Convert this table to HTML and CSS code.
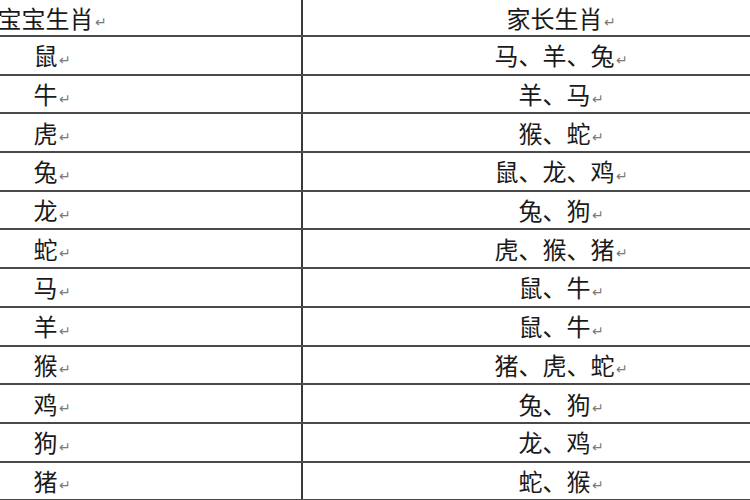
FILE: index.html
```html
<!DOCTYPE html>
<html lang="zh">
<head>
<meta charset="utf-8">
<link rel="stylesheet" href="styles.css">
</head>
<body>
<div class="page">
  <div class="table">
    <div class="row head"><div class="cell left">宝宝生肖<span class="pm">↵</span></div><div class="cell right">家长生肖<span class="pm">↵</span></div></div>
    <div class="row"><div class="cell left">鼠<span class="pm">↵</span></div><div class="cell right">马、羊、兔<span class="pm">↵</span></div></div>
    <div class="row"><div class="cell left">牛<span class="pm">↵</span></div><div class="cell right">羊、马<span class="pm">↵</span></div></div>
    <div class="row"><div class="cell left">虎<span class="pm">↵</span></div><div class="cell right">猴、蛇<span class="pm">↵</span></div></div>
    <div class="row"><div class="cell left">兔<span class="pm">↵</span></div><div class="cell right">鼠、龙、鸡<span class="pm">↵</span></div></div>
    <div class="row"><div class="cell left">龙<span class="pm">↵</span></div><div class="cell right">兔、狗<span class="pm">↵</span></div></div>
    <div class="row"><div class="cell left">蛇<span class="pm">↵</span></div><div class="cell right">虎、猴、猪<span class="pm">↵</span></div></div>
    <div class="row"><div class="cell left">马<span class="pm">↵</span></div><div class="cell right">鼠、牛<span class="pm">↵</span></div></div>
    <div class="row"><div class="cell left">羊<span class="pm">↵</span></div><div class="cell right">鼠、牛<span class="pm">↵</span></div></div>
    <div class="row"><div class="cell left">猴<span class="pm">↵</span></div><div class="cell right">猪、虎、蛇<span class="pm">↵</span></div></div>
    <div class="row"><div class="cell left">鸡<span class="pm">↵</span></div><div class="cell right">兔、狗<span class="pm">↵</span></div></div>
    <div class="row"><div class="cell left">狗<span class="pm">↵</span></div><div class="cell right">龙、鸡<span class="pm">↵</span></div></div>
    <div class="row last"><div class="cell left">猪<span class="pm">↵</span></div><div class="cell right">蛇、猴<span class="pm">↵</span></div></div>
  </div>
</div>
</body>
</html>
```
FILE: styles.css
```css
html, body {
  margin: 0;
  padding: 0;
  background: #ffffff;
}
.page {
  width: 750px;
  height: 500px;
  overflow: hidden;
  background: #ffffff;
}
.table {
  display: flex;
  flex-direction: column;
  width: 1016px;
  margin-left: -197px;
  font-family: "Noto Sans CJK SC", "Noto Sans", sans-serif;
  font-size: 24px;
  color: #1a1a1a;
}
.row {
  display: flex;
  height: 36.7px;
  border-bottom: 2px solid #4a4a4a;
}
.row.head {
  height: 35px;
}
.cell {
  display: flex;
  align-items: center;
  justify-content: center;
  line-height: 1;
}
.left {
  width: 498px;
  border-right: 2px solid #3a3a3a;
}
.right {
  flex: 1;
}
.pm {
  font-size: 14px;
  color: #7a7a7a;
  margin-left: 1px;
  margin-top: 7px;
}
```
